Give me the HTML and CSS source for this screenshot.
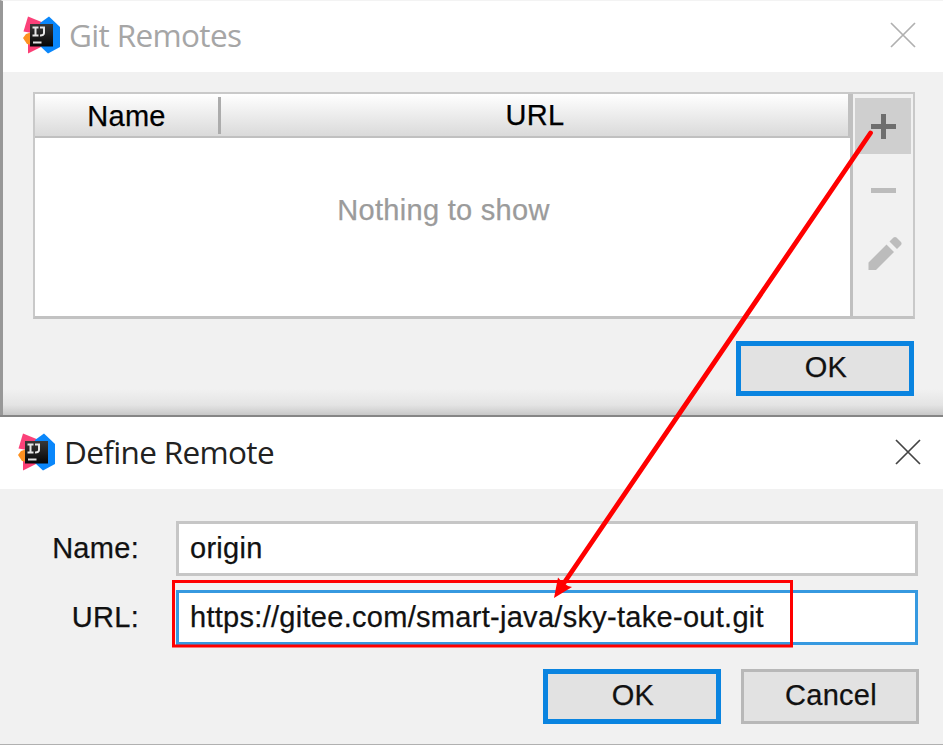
FILE: index.html
```html
<!DOCTYPE html>
<html lang="en">
<head>
<meta charset="utf-8">
<title>Git Remotes</title>
<link rel="stylesheet" href="styles.css">
</head>
<body>
<svg class="defs" width="0" height="0" aria-hidden="true">
  <defs>
    <linearGradient id="tile" x1="0" y1="0" x2="0" y2="1"><stop offset="0" stop-color="#383838"/><stop offset=".55" stop-color="#1c1c1c"/><stop offset="1" stop-color="#050505"/></linearGradient>
    <symbol id="idea" viewBox="0 0 38 38">
      <path d="M5 .5 21 7 9 17 .5 15.500Z" fill="#fb4179"/>
      <path d="M5 37.500V27L9 25l11 5Z" fill="#fb3f75"/>
      <path d="M0 22 3 18l6-2v13l-5-1Z" fill="#fd9120"/>
      <path d="M26 .5 37 11v20L25 37.500 17 30V7Z" fill="#0a87fb"/>
      <path d="M7 8h23v22.500H7Z" fill="url(#tile)"/>
      <path d="M9.500 11.500h6M9.500 19.500h6M12.500 11v9M17 11.500h5M21 11v6q0 2.500-4 2.400" fill="none" stroke="#e6e6e6" stroke-width="2"/>
      <path d="M10 26.500h8.500" stroke="#e0e0e0" stroke-width="2"/>
    </symbol>
    <symbol id="close" viewBox="0 0 26 26"><path d="M1 1 25 25M25 1 1 25" fill="none" stroke="currentColor" stroke-width="1.700"/></symbol>
  </defs>
</svg>
<main class="screen">
  <section class="remotes">
    <header class="titlebar">
      <svg class="logo"><use href="#idea"/></svg>
      <h1 class="title">Git Remotes</h1>
      <svg class="close"><use href="#close"/></svg>
    </header>
    <div class="table">
      <div class="grid">
        <div class="head">
          <span class="col-name">Name</span>
          <span class="col-url">URL</span>
        </div>
        <p class="empty">Nothing to show</p>
      </div>
      <div class="tools">
        <div class="tool active"><svg viewBox="0 0 56 56"><path d="M16 28.500h25M28.500 16v25" stroke="#6e6e6e" stroke-width="5"/></svg></div>
        <div class="tool"><svg viewBox="0 0 56 56"><path d="M16 28.500h25" stroke="#bcbcbc" stroke-width="5"/></svg></div>
        <div class="tool"><svg viewBox="0 0 56 56"><path d="M13.500 44v-7.500L31.500 18.500l7.500 7.500-18 18ZM34.500 15.500l4-4q1.500-1 3 0l4.500 4.500q1.200 1.500 0 3l-4 4Z" fill="#bcbcbc"/></svg></div>
      </div>
    </div>
    <div class="buttons"><button class="btn primary">OK</button></div>
  </section>
  <section class="define">
    <header class="titlebar">
      <svg class="logo"><use href="#idea"/></svg>
      <h2 class="title">Define Remote</h2>
      <svg class="close"><use href="#close"/></svg>
    </header>
    <div class="form">
      <div class="row"><span class="label">Name:</span><div class="input">origin</div></div>
      <div class="row"><span class="label">URL:</span><div class="input focused">https://gitee.com/smart-java/sky-take-out.git</div></div>
    </div>
    <div class="buttons"><button class="btn primary">OK</button><button class="btn">Cancel</button></div>
  </section>
  <svg class="overlay" viewBox="0 0 943 745">
    <rect x="173.500" y="581.500" width="618" height="64.500" fill="none" stroke="#f00" stroke-width="3"/>
    <path d="M870.500 133 564 583" stroke="#f00" stroke-width="4.800" stroke-linecap="round"/>
    <path d="M554 598 558 577.500 562 582 568 586 572 587Z" fill="#f00"/>
  </svg>
</main>
</body>
</html>
```
FILE: styles.css
```css
* { box-sizing: border-box; }
body { margin: 0; font-family: "Liberation Sans", Arial, sans-serif; font-size: 29px; letter-spacing: .29px; color: #111; background: #f1f1f1; -webkit-text-stroke: .25px; }
.defs { position: absolute; }
.screen { position: relative; width: 943px; height: 745px; overflow: hidden; display: flex; flex-direction: column; }
.remotes { height: 415px; border-left: 3px solid #989898; border-top: 1px solid #f3f3f3; background: linear-gradient(#f1f1f1 0, #f1f1f1 388px, #e4e4e4 404px, #c8c8c8 414px); }
.titlebar { display: flex; align-items: center; background: #fff; }
.remotes .titlebar { height: 71px; padding: 0 27px 4px 20px; color: #a6a6a6; }
.define .titlebar { height: 72px; padding: 0 22px 3px 18px; color: #222; }
.logo { width: 38px; height: 38px; flex: none; }
.title { flex: 1; margin: 0 0 0 8px; font: 400 31.5px/40px "Open Sans", "Noto Sans", sans-serif; letter-spacing: -.65px; white-space: nowrap; -webkit-text-stroke: 0; }
.close { width: 26px; height: 26px; color: #b0b0b0; }
.define .close { color: #444; margin-top: 1px; }
.table { display: flex; width: 882px; height: 227px; margin: 20px 0 0 30px; border: 2px solid #c9c9c9; border-bottom: 3px solid #c2c2c2; }
.grid { flex: 1; background: #fff; }
.head { height: 44px; display: flex; align-items: center; background: linear-gradient(#fff, #dadada); border-bottom: 2px solid #c0c0c0; border-right: 2px solid #c0c0c0; color: #000; }
.col-name { width: 186px; height: 37px; line-height: 39px; text-align: center; border-right: 3px solid #acacac; }
.col-url { flex: 1; text-align: center; line-height: 39px; padding-left: 1px; }
.empty { margin: 55px 0 0; padding-left: 2px; text-align: center; line-height: 34px; color: #9b9b9b; }
.tools { width: 63px; border-left: 3px solid #c0c0c0; padding: 4px 2px; display: flex; flex-direction: column; align-items: center; gap: 8px; background: #f1f1f1; }
.tool { width: 56px; height: 56px; flex: none; }
.tool svg { display: block; width: 56px; height: 56px; }
.tool.active { background: #cfcfcf; }
.buttons { display: flex; justify-content: flex-end; gap: 20px; }
.remotes .buttons { margin: 22px 29px 0 0; }
.btn { width: 178px; height: 55px; padding: 0 0 3px 2px; border: 3px solid #b8b8b8; border-radius: 0; background: #e2e2e2; font: inherit; letter-spacing: inherit; color: #111; }
.btn.primary { border: 5px solid #0a84e0; }
.define { height: 330px; border-top: 2px solid #858585; border-bottom: 1px solid #b0b0b0; background: #f1f1f1; }
.form { display: flex; flex-direction: column; gap: 14px; padding: 32px 25px 0 0; }
.row { display: flex; align-items: center; height: 55px; }
.label { width: 139px; text-align: right; margin-right: 37px; }
.input { flex: 1; height: 55px; padding-left: 11px; border: 3px solid #c6c6c6; background: #fff; line-height: 49px; white-space: nowrap; }
.input.focused { border-color: #3699e0; }
.define .buttons { margin: 24px 24px 0 0; }
.overlay { position: absolute; left: 0; top: 0; width: 943px; height: 745px; }
```
